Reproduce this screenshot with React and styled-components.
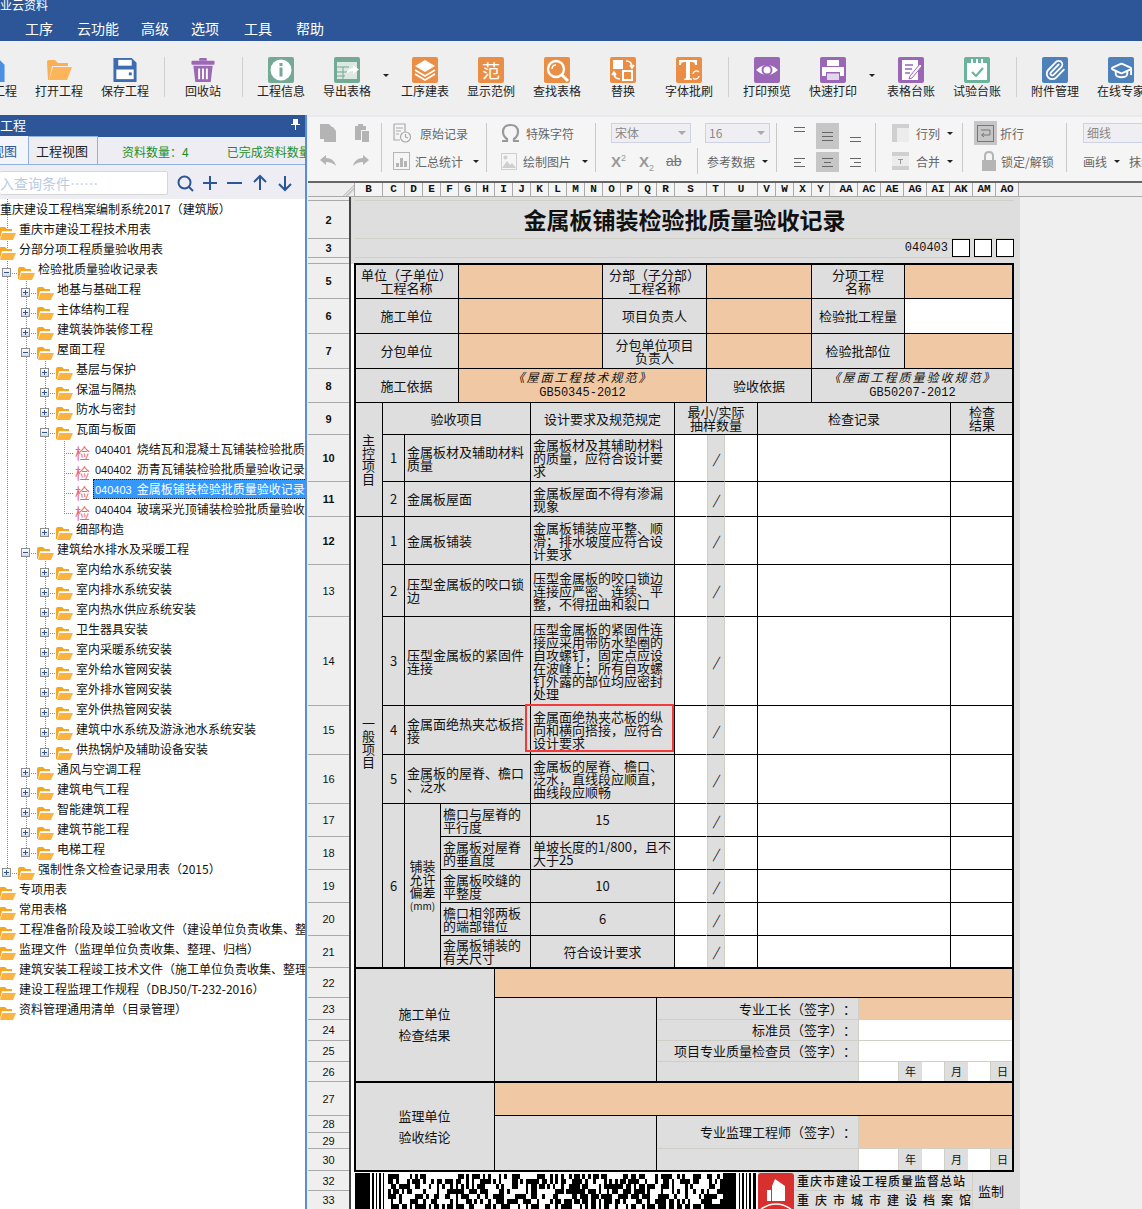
import React from "react";
import styled, { createGlobalStyle } from "styled-components";
import { Paperclip, GraduationCap } from "lucide-react";

const GlobalStyle = createGlobalStyle`
  html, body { margin: 0; padding: 0; background: #efefef; }
  body {
    font-family: "Noto Sans CJK SC", "Noto Sans", sans-serif;
    font-size: 13px;
    color: #111;
    text-spacing-trim: space-all;
  }
  * { box-sizing: border-box; }
`;

// ---------- layout shell ----------
const Page = styled.div`
  width: 1142px;
  height: 1209px;
  overflow: hidden;
  display: flex;
  flex-direction: column;
`;

const TitleBar = styled.div`
  height: 41px;
  flex: none;
  background: #2c5697;
  color: #fff;
  overflow: hidden;
`;

const Caption = styled.div`
  margin-top: -4px;
  height: 18px;
  line-height: 18px;
  font-size: 12px;
`;

const Menu = styled.div`
  display: flex;
  height: 27px;
  align-items: center;
  font-size: 14px;
`;

const MenuItem = styled.span`
  margin-left: ${(p) => p.$ml}px;
`;

const Toolbar = styled.div`
  height: 74px;
  flex: none;
  background: #efefef;
  overflow: hidden;
  display: flex;
  padding-top: 16px;
  margin-left: -40px;
  width: 1182px;
`;

const ToolItem = styled.div`
  width: 66px;
  flex: none;
  display: flex;
  flex-direction: column;
  align-items: center;
  font-size: 12px;
  color: #222;
  line-height: 16px;
  white-space: nowrap;
`;

const ToolIcon = styled.div`
  width: 26px;
  height: 26px;
  border-radius: 2px;
  background: ${(p) => p.$bg || "transparent"};
  color: #fff;
  display: flex;
  align-items: center;
  justify-content: center;
  font-size: 18px;
  line-height: 1;
`;

const ToolSep = styled.div`
  width: 12px;
  flex: none;
  display: flex;
  justify-content: center;
  height: 42px;
  &::after {
    content: "";
    width: 1px;
    height: 40px;
    background: #d0d0d0;
  }
`;

const ToolCaret = styled.div`
  width: 12px;
  flex: none;
  padding-top: 17px;
  display: flex;
  justify-content: center;
  &::after {
    content: "";
    width: 0;
    height: 0;
    border: 3px solid transparent;
    border-top: 3px solid #222;
  }
`;

const Workspace = styled.div`
  flex: 1;
  display: flex;
  min-height: 0;
`;

// ---------- left panel ----------
const LeftPanel = styled.div`
  width: 307px;
  flex: none;
  display: flex;
  flex-direction: column;
  background: #fff;
  border-right: 2px solid #5a8fd8;
  overflow: hidden;
`;

const PanelHead = styled.div`
  height: 22px;
  flex: none;
  background: #2c5697;
  color: #fff;
  display: flex;
  align-items: center;
  justify-content: space-between;
  padding: 0 5px 3px 0;
  font-size: 13px;
`;

const TabRow = styled.div`
  height: 28px;
  flex: none;
  background: #ededf3;
  display: flex;
  align-items: flex-end;
  border-bottom: 1px solid #8fb2e2;
  padding-top: 1px;
`;

const ViewTab = styled.div`
  height: 28px;
  width: ${(p) => p.$w}px;
  flex: none;
  display: flex;
  align-items: center;
  justify-content: flex-end;
  white-space: nowrap;
  padding-right: ${(p) => p.$pr}px;
  font-size: 13px;
  color: ${(p) => (p.$active ? "#2c5697" : "#222")};
  background: ${(p) => (p.$active ? "#f4f5fa" : "#eeeef2")};
  border-right: ${(p) => (p.$active ? "none" : "1px solid #8fb2e2")};
  border-left: ${(p) => (p.$active ? "none" : "1px solid #8fb2e2")};
  border-top: ${(p) => (p.$active ? "none" : "1px solid #8fb2e2")};
`;

const Count = styled.span`
  color: #1e8f1e;
  font-size: 12px;
  white-space: nowrap;
  align-self: center;
  margin-left: ${(p) => p.$ml}px;
`;

const SearchRow = styled.div`
  height: 34px;
  flex: none;
  background: #ededf3;
  display: flex;
  align-items: center;
  padding-top: 2px;
`;

const SearchInput = styled.div`
  width: 168px;
  height: 24px;
  background: #fff;
  border: 1px solid #d6d6d6;
  border-left: none;
  border-radius: 2px;
  color: #b8cce4;
  font-size: 14px;
  line-height: 22px;
  white-space: nowrap;
  overflow: hidden;
  flex: none;
`;

const SearchTools = styled.div`
  display: flex;
  gap: 7px;
  margin-left: 8px;
`;

const Tree = styled.div`
  position: relative;
  flex: 1;
  overflow: hidden;
`;

const TreeLines = styled.svg`
  position: absolute;
  left: 0;
  top: 0;
`;

const TreeRow = styled.div`
  position: relative;
  height: 20px;
  display: flex;
  align-items: center;
  white-space: nowrap;
  font-size: 12px;
  margin-left: ${(p) => p.$x}px;
`;

const Toggle = styled.span`
  position: absolute;
  left: -16px;
  top: 9px;
  width: 9px;
  height: 9px;
  background: linear-gradient(#fff, #d8d8e0);
  border: 1px solid #8c8c8c;
  &::before {
    content: "";
    position: absolute;
    left: 1px;
    right: 1px;
    top: 3px;
    height: 1px;
    background: #2c5697;
  }
  &::after {
    content: ${(p) => (p.$open ? "none" : '""')};
    position: absolute;
    top: 1px;
    bottom: 1px;
    left: 3px;
    width: 1px;
    background: #2c5697;
  }
`;

const FolderWrap = styled.span`
  width: 20px;
  flex: none;
  display: flex;
`;

const LeafMark = styled.span`
  width: 20px;
  flex: none;
  color: #e8686c;
  font-size: 15px;
  line-height: 20px;
  margin-top: 8px;
`;

const TreeLabel = styled.span`
  height: 20px;
  line-height: 19px;
  padding-right: 2px;
  ${(p) =>
    p.$selected &&
    `background: #3399ff; color: #fff; outline: 1px dotted #123; outline-offset: -1px; margin-left:-2px; padding-left:2px;`}
`;

const Code = styled.span`
  font-family: "Liberation Sans", sans-serif;
  font-size: 11px;
  margin-right: 5px;
`;

// ---------- right side ----------
const RightPanel = styled.div`
  flex: 1;
  min-width: 0;
  margin-left: 1px;
  display: flex;
  flex-direction: column;
  overflow: hidden;
  background: #efefef;
`;

const Ribbon = styled.div`
  height: 66px;
  flex: none;
  display: flex;
  background: #f5f5f5;
  border-top: 2px solid #e9e9ef;
  color: #666;
  font-size: 12px;
`;

const RibbonGroup = styled.div`
  width: ${(p) => p.$w}px;
  flex: none;
  height: 49px;
  margin-top: 6px;
  display: flex;
  flex-direction: column;
  gap: 8px;
  border-right: ${(p) => (p.$last ? "none" : "1px solid #c9c9c9")};
  padding-left: ${(p) => p.$pl || 0}px;
  white-space: nowrap;
`;

const RibbonRow = styled.div`
  height: 20px;
  display: flex;
  align-items: center;
  gap: ${(p) => p.$gap || 0}px;
`;

const DropCaret = styled.span`
  width: 0;
  height: 0;
  margin-left: ${(p) => p.$ml ?? 5}px;
  margin-top: 3px;
  border: 3px solid transparent;
  border-top: 3px solid #222;
`;

const FontSelect = styled.div`
  width: ${(p) => p.$w}px;
  height: 20px;
  margin-right: ${(p) => p.$mr || 0}px;
  border: 1px solid #cfd2e2;
  background: #efeff3;
  color: #888;
  padding-left: 3px;
  line-height: 18px;
  position: relative;
  flex: none;
  &::after {
    content: "";
    position: absolute;
    right: 4px;
    top: 7px;
    border: 4px solid transparent;
    border-top: 4px solid #aaa;
  }
`;

const Script = styled.span`
  font-family: "Liberation Sans", sans-serif;
  font-weight: 700;
  font-size: 15px;
  color: #999;
  width: ${(p) => p.$w}px;
  flex: none;
  sup, sub { font-size: 9px; font-weight: 400; line-height: 0; }
`;

const Strike = styled.span`
  font-family: "Liberation Sans", sans-serif;
  font-size: 14px;
  color: #777;
  text-decoration: line-through;
  width: 26px;
  flex: none;
`;

const InnerSep = styled.span`
  width: 1px;
  height: 26px;
  background: #c9c9c9;
  margin: 0 9px 0 5px;
`;

const AlignGrid = styled.div`
  display: grid;
  grid-template-columns: 28px 28px 28px;
  grid-template-rows: 26px 20px;
  row-gap: 3px;
`;

const AlignBtn = styled.div`
  display: flex;
  justify-content: center;
  align-items: ${(p) => p.$v || "center"};
  background: ${(p) => (p.$on ? "#c6c6c6" : "transparent")};
  width: 23px;
  padding: 2px 0;
`;

const ActiveBox = styled.span`
  width: 23px;
  height: 24px;
  display: flex;
  align-items: center;
  justify-content: center;
  background: #c6c6c6;
  flex: none;
`;

const ColHeader = styled.div`
  height: 16px;
  flex: none;
  display: flex;
  border-top: 2px solid #666;
  border-bottom: 1px solid #aaa;
`;

const Corner = styled.div`
  width: 47px;
  flex: none;
  background: linear-gradient(135deg, #eee 80%, #bbb 80%, #eee 86%, #bbb 86%, #eee 92%);
  border-right: 1px solid #aaa;
`;

const ColCell = styled.div`
  width: ${(p) => p.$w}px;
  flex: none;
  margin-right: ${(p) => p.$mr || 0}px;
  border-right: 1px solid #aaa;
  text-align: center;
  background: #f4f4f4;
  font: 700 11px/13px "Liberation Mono", monospace;
`;

const Sheet = styled.div`
  flex: 1;
  display: flex;
  min-height: 0;
`;

const RowHeads = styled.div`
  width: 41px;
  flex: none;
  display: flex;
  flex-direction: column;
  background: #efefef;
`;

const RowHead = styled.div`
  height: ${(p) => p.$h}px;
  flex: none;
  display: flex;
  align-items: center;
  justify-content: center;
  border-bottom: 1px solid #aaa;
  font: ${(p) => (p.$bold ? 700 : 400)} 11px "Liberation Sans", sans-serif;
  overflow: hidden;
`;

const Gutter = styled.div`
  width: 6px;
  flex: none;
  background: #fff;
  border-left: 2px solid #444;
  &::before {
    content: "";
    display: block;
    height: 67px;
    background: #dedede;
  }
`;

const SheetGrid = styled.div`
  position: relative;
  display: grid;
  width: 665px;
  flex: none;
  grid-template-columns: ${(p) => p.$cols};
  grid-template-rows: ${(p) => p.$rows};
  align-self: flex-start;
  font-size: 13px;
  line-height: 13px;
  color: #111;
`;

const BG = { gray: "#dedede", orange: "#f0c8a4", white: "#fff" };

const Cell = styled.div`
  grid-column: ${(p) => p.$col};
  grid-row: ${(p) => p.$row};
  display: flex;
  align-items: center;
  justify-content: ${(p) => (p.$left ? "flex-start" : p.$right ? "flex-end" : "center")};
  text-align: ${(p) => (p.$left ? "left" : p.$right ? "right" : "center")};
  white-space: pre-line;
  overflow: hidden;
  padding: 0 2px;
  padding-bottom: ${(p) => (p.$flat ? 0 : 1)}px;
  background: ${(p) => BG[p.$bg || "gray"]};
  border-right: 1px solid ${(p) => (p.$soft ? "#cfcfc8" : p.$none ? "transparent" : "#000")};
  border-bottom: 1px solid ${(p) => (p.$soft ? "#cfcfc8" : "#000")};
`;

const TallText = styled.div`
  line-height: 21px;
`;

const MmText = styled.span`
  font-size: 10px;
`;

const PlainCell = styled(Cell)`
  border: none;
  border-bottom: 1px solid #d0d0c8;
`;

const TitleCell = styled(PlainCell)`
  font-size: 23px;
  line-height: 26px;
  font-weight: 700;
`;

const SerialCell = styled(PlainCell)`
  justify-content: flex-end;
  gap: 4px;
  padding: 0;
  font: 12px "Liberation Mono", monospace;
`;

const SerialBox = styled.span`
  width: 18px;
  height: 18px;
  background: #fff;
  border: 1px solid #000;
  flex: none;
`;

const NormCell = styled(Cell)`
  font-size: 12px;
  line-height: 14px;
  font-style: italic;
  letter-spacing: 2px;
`;

const NormCode = styled.span`
  font: 12px/13px "Liberation Mono", monospace;
  letter-spacing: 0;
  font-style: normal;
`;

const Slash = styled(Cell)`
  font-style: italic;
  border-color: #000;
  border-right-color: #cfcfc8;
  box-shadow: inset 1px 0 #cfcfc8;
`;

const SmallCell = styled(Cell)`
  font-size: 11px;
  border-right: none;
`;

const Frame = styled.div`
  grid-column: ${(p) => p.$col};
  grid-row: ${(p) => p.$row};
  border: 2px solid #000;
  margin: -1px 0 -1px -1px;
  pointer-events: none;
  z-index: 2;
`;

const HeavyLine = styled.div`
  grid-column: ${(p) => p.$col};
  grid-row: ${(p) => p.$row};
  height: 2px;
  margin-top: -1px;
  background: #000;
  z-index: 2;
`;

const RedBox = styled.div`
  position: absolute;
  left: 170px;
  top: 507px;
  width: 149px;
  height: 48px;
  border: 2px solid #f23a3a;
  z-index: 3;
`;

const BarcodeCell = styled.div`
  grid-column: ${(p) => p.$col};
  grid-row: ${(p) => p.$row};
  background: #fff;
  overflow: hidden;
  padding-top: 2px;
`;

const LogoCell = styled.div`
  grid-column: ${(p) => p.$col};
  grid-row: ${(p) => p.$row};
  background: #dedede;
  padding-top: 2px;
`;

const StationCell = styled(Cell)`
  font-size: 12px;
  font-weight: 500;
  letter-spacing: ${(p) => p.$sp}px;
  border-right: none;
  border-bottom: 1px solid #cfcfc8;
  justify-content: flex-start;
  white-space: nowrap;
  padding-left: 2px;
`;

const StampCell = styled(Cell)`
  border: none;
  border-left: 1px solid #cfcfc8;
  justify-content: flex-start;
  padding-left: 5px;
`;

// ---------- drawings ----------
const Folder = ({ w = 26, h = 22 }) => (
  <svg width={w} height={h} viewBox="0 0 26 22">
    <path d="M2 21 L1 3 Q1 1 3 1 H9 L12 4 H22 V7 H6 L3 21 Z" fill="#f9af52" />
    <path d="M3 21 L7 8 H26 L21 21 Z" fill="#fdb55a" />
  </svg>
);

const TreeFolder = () => (
  <svg width="17" height="15" viewBox="0 0 17 15" style={{ marginTop: 6 }}>
    <path d="M0 4 Q0 2 2 2 H6 L8 4 H13 V6 H3 L1 14 H0 Z" fill="#f5a623" />
    <path d="M3 6 H13 V7 H4 Z" fill="#fff2d8" />
    <path d="M3.5 8 H17 L14 15 H1 Z" fill="#fdb33f" />
  </svg>
);

const Floppy = () => (
  <svg width="26" height="26" viewBox="0 0 26 27">
    <path d="M1 1 H20 L25 6 V26 H1 Z" fill="#3e6cb0" />
    <rect x="6" y="3" width="14" height="6" fill="#fff" />
    <rect x="4" y="13" width="18" height="10" fill="#fff" />
    <rect x="17" y="16" width="3" height="3" fill="#3e6cb0" />
  </svg>
);

const Trash = () => (
  <svg width="26" height="26" viewBox="0 0 26 27" fill="#9b69b4">
    <rect x="9" y="1" width="8" height="3" rx="1" />
    <rect x="1" y="4" width="24" height="4" rx="1" />
    <path d="M3 9 H23 L21 26 H5 Z" />
    <path d="M9 12 V23 M13 12 V23 M17 12 V23" stroke="#fff" strokeWidth="2" />
  </svg>
);

const Glyph = ({ children }) => (
  <svg width="26" height="26" viewBox="0 0 26 26" fill="none" stroke="#fff" strokeWidth="2">
    {children}
  </svg>
);

const InfoGlyph = () => (
  <Glyph>
    <circle cx="13" cy="13" r="10.5" fill="#fff" stroke="none" />
    <rect x="11.5" y="10.5" width="3" height="9" fill="#73a995" stroke="none" />
    <rect x="11.5" y="6" width="3" height="3" fill="#73a995" stroke="none" />
  </Glyph>
);

const ExportGlyph = () => (
  <Glyph>
    <rect x="3" y="5" width="20" height="17" fill="#dbe9e2" stroke="none" />
    <path d="M3 10 H15 M3 15 H13 M3 19 H11 M9 10 V22" stroke="#73a995" strokeWidth="1" />
    <path d="M12 17 Q14 11 19 11 V8 L25 12.5 L19 17 V14 Q15 14 12 17 Z" fill="#fff" stroke="none" />
  </Glyph>
);

const LayersGlyph = () => (
  <Glyph>
    <path d="M13 3 L23 9 L13 15 L3 9 Z" fill="#fff" stroke="none" />
    <path d="M3 13 L13 19 L23 13 M3 17 L13 23 L23 17" strokeWidth="1.6" />
  </Glyph>
);

const SearchGlyph = () => (
  <Glyph>
    <circle cx="12" cy="12" r="8" strokeWidth="2.4" />
    <path d="M18 18 L24 24" strokeWidth="3" />
    <path d="M8 12 Q8 8 12 8" strokeWidth="1.4" />
  </Glyph>
);

const ReplaceGlyph = () => (
  <Glyph>
    <rect x="3" y="3" width="10" height="9" fill="#fff" stroke="none" />
    <rect x="13" y="14" width="9" height="9" />
    <path d="M16 4 Q22 4 22 10 M20 8 L22 11 L24 8 M10 22 Q4 22 4 16 M2 18 L4 15 L6 18" strokeWidth="1.6" />
  </Glyph>
);

const TypeGlyph = () => (
  <svg width="26" height="26" viewBox="0 0 26 26" fill="#fff">
    <path d="M3 3 H21 V8 H19 Q19 5 16 5 H14 V21 L16 22 V23 H8 V22 L10 21 V5 H8 Q5 5 5 8 H3 Z" />
    <path d="M17 17 A3.5 3.5 0 0 1 23 15 M23 19 A3.5 3.5 0 0 1 17 21" fill="none" stroke="#fff" strokeWidth="1.4" />
  </svg>
);

const EyeGlyph = () => (
  <Glyph>
    <path d="M2 13 Q13 3 24 13 Q13 23 2 13 Z" fill="#fff" stroke="none" />
    <circle cx="13" cy="13" r="4.5" fill="none" stroke="#9a66b6" strokeWidth="2" />
  </Glyph>
);

const PrinterGlyph = () => (
  <Glyph>
    <rect x="7" y="3" width="12" height="6" fill="#fff" stroke="none" />
    <path d="M2 10 H24 V19 H20 V15 H6 V19 H2 Z" fill="#fff" stroke="none" />
    <rect x="7" y="16.5" width="12" height="6.5" fill="#e3d5ec" stroke="none" />
  </Glyph>
);

const NoteGlyph = () => (
  <Glyph>
    <path d="M4 3 H20 V23 H4 Z" fill="#fff" stroke="none" />
    <path d="M7 8 H15 M7 12 H14 M7 16 H12" stroke="#9a66b6" strokeWidth="1.5" />
    <path d="M12 19 L22 7 L24 9 L14 21 L11 22 Z" fill="#fff" stroke="#9a66b6" strokeWidth="1" />
  </Glyph>
);

const PlanGlyph = () => (
  <Glyph>
    <path d="M3 6 H23 V23 H3 Z" fill="#fff" stroke="none" />
    <path d="M8 2 V9 M13 2 V9 M18 2 V9" strokeWidth="2" />
    <path d="M8 15 L12 19 L19 11" stroke="#6bb39a" strokeWidth="2.2" />
  </Glyph>
);

const Gray = ({ w = 20, h = 20, children, vb }) => (
  <svg width={w} height={h} viewBox={vb || `0 0 ${w} ${h}`} fill="#b4b4b4" stroke="none" style={{ flex: "none" }}>
    {children}
  </svg>
);

const Lines = ({ rows }) => (
  <svg width="17" height="12" viewBox="0 0 17 12" stroke="#666" strokeWidth="1">
    {rows.map(([a, b], i) => (
      <path key={i} d={`M${a} ${i * 4 + 2.5} H${b}`} />
    ))}
  </svg>
);

const SearchIcons = () => (
  <>
    <svg width="18" height="18" viewBox="0 0 18 18" fill="none" stroke="#2c5697" strokeWidth="2">
      <circle cx="8.5" cy="8.5" r="6" />
      <path d="M13 13 L17 17" />
    </svg>
    <svg width="18" height="18" viewBox="0 0 18 18" fill="none" stroke="#2c5697" strokeWidth="2">
      <path d="M2 9 H16 M9 2 V16" />
    </svg>
    <svg width="18" height="18" viewBox="0 0 18 18" fill="none" stroke="#2c5697" strokeWidth="2">
      <path d="M1 9 H16" />
    </svg>
    <svg width="18" height="18" viewBox="0 0 18 18" fill="none" stroke="#2c5697" strokeWidth="2">
      <path d="M9 16 V2 M3 8 L9 2 L15 8" />
    </svg>
    <svg width="18" height="18" viewBox="0 0 18 18" fill="none" stroke="#2c5697" strokeWidth="2">
      <path d="M9 2 V16 M3 10 L9 16 L15 10" />
    </svg>
  </>
);

// pseudo random modules for the PDF417 style strip
const barcodeRects = (() => {
  const out = [];
  let seed = 4177;
  const next = () => {
    seed = (seed * 1103 + 12345) % 65536;
    return seed / 65536;
  };
  for (let y = 0; y < 8; y++) {
    for (let x = 33; x < 366; x += 2.7) {
      if (next() > 0.48) out.push([x, y * 5 + 1, 2.7, 5]);
    }
  }
  return out;
})();

const Barcode = () => (
  <svg width="403" height="38" viewBox="0 0 403 38" shapeRendering="crispEdges" style={{ display: "block" }}>
    <rect x="0" y="0" width="15" height="38" />
    <path d="M17 0 h2 v38 h-2z M21 0 h1 v38 h-1z M24 0 h2 v38 h-2z M28 0 h1 v38 h-1z" />
    {barcodeRects.map(([x, y, w, h], i) => (
      <rect key={i} x={x} y={y} width={w} height={h} />
    ))}
    <rect x="368" y="0" width="13" height="38" />
    <path d="M384 0 h1 v38 h-1z M387 0 h2 v38 h-2z M391 0 h1 v38 h-1z M394 0 h2 v38 h-2z M398 0 h3 v38 h-3z" />
  </svg>
);

const Logo = () => (
  <svg width="36" height="38" viewBox="0 0 36 38" style={{ display: "block" }}>
    <path d="M3 0 H33 Q36 0 36 3 V38 H0 V3 Q0 0 3 0 Z" fill="#d8302e" />
    <path d="M14 28 V13 L17 6 L27 13 V28 Z M9 28 V17 H13 V28 Z" fill="#fff" />
    <path d="M3 36 Q18 26 33 36" fill="none" stroke="#fff" strokeWidth="1.5" />
  </svg>
);

// ---------- data ----------
const MENU = [["工序", 25], ["云功能", 24], ["高级", 22], ["选项", 22], ["工具", 25], ["帮助", 24]];

const TOOLS = [
  { label: "新建工程", icon: (
    <svg width="26" height="26" viewBox="0 0 26 27"><path d="M1 1 H18 L25 8 V26 H1 Z" fill="#4a90e2" /></svg>
  ) },
  { label: "打开工程", icon: <Folder w={26} h={24} /> },
  { label: "保存工程", icon: <Floppy /> },
  { sep: true },
  { label: "回收站", icon: <Trash /> },
  { sep: true },
  { label: "工程信息", bg: "#73a995", icon: <InfoGlyph /> },
  { label: "导出表格", bg: "#73a995", icon: <ExportGlyph />, caret: true },
  { label: "工序建表", bg: "#eb8e45", icon: <LayersGlyph /> },
  { label: "显示范例", bg: "#eb8e45", icon: "范" },
  { label: "查找表格", bg: "#eb8e45", icon: <SearchGlyph /> },
  { label: "替换", bg: "#eb8e45", icon: <ReplaceGlyph /> },
  { label: "字体批刷", bg: "#eb8e45", icon: <TypeGlyph /> },
  { sep: true },
  { label: "打印预览", bg: "#9a66b6", icon: <EyeGlyph /> },
  { label: "快速打印", bg: "#9a66b6", icon: <PrinterGlyph />, caret: true },
  { label: "表格台账", bg: "#9a66b6", icon: <NoteGlyph /> },
  { label: "试验台账", bg: "#6bb39a", icon: <PlanGlyph /> },
  { sep: true },
  { label: "附件管理", bg: "#4e80b9", icon: <Paperclip size={22} strokeWidth={2} /> },
  { label: "在线专家", bg: "#4e80b9", icon: <GraduationCap size={23} strokeWidth={2} /> },
];

const TREE = [
  [0, "重庆建设工程档案编制系统2017（建筑版）"],
  [1, "重庆市建设工程技术用表"],
  [1, "分部分项工程质量验收用表"],
  [2, "检验批质量验收记录表", "open"],
  [3, "地基与基础工程", "closed"],
  [3, "主体结构工程", "closed"],
  [3, "建筑装饰装修工程", "closed"],
  [3, "屋面工程", "open"],
  [4, "基层与保护", "closed"],
  [4, "保温与隔热", "closed"],
  [4, "防水与密封", "closed"],
  [4, "瓦面与板面", "open"],
  [5, "烧结瓦和混凝土瓦铺装检验批质量验收记录", "leaf", "040401"],
  [5, "沥青瓦铺装检验批质量验收记录", "leaf", "040402"],
  [5, "金属板铺装检验批质量验收记录", "leaf", "040403"],
  [5, "玻璃采光顶铺装检验批质量验收记录", "leaf", "040404"],
  [4, "细部构造", "closed"],
  [3, "建筑给水排水及采暖工程", "open"],
  [4, "室内给水系统安装", "closed"],
  [4, "室内排水系统安装", "closed"],
  [4, "室内热水供应系统安装", "closed"],
  [4, "卫生器具安装", "closed"],
  [4, "室内采暖系统安装", "closed"],
  [4, "室外给水管网安装", "closed"],
  [4, "室外排水管网安装", "closed"],
  [4, "室外供热管网安装", "closed"],
  [4, "建筑中水系统及游泳池水系统安装", "closed"],
  [4, "供热锅炉及辅助设备安装", "closed"],
  [3, "通风与空调工程", "closed"],
  [3, "建筑电气工程", "closed"],
  [3, "智能建筑工程", "closed"],
  [3, "建筑节能工程", "closed"],
  [3, "电梯工程", "closed"],
  [2, "强制性条文检查记录用表（2015）", "closed"],
  [1, "专项用表"],
  [1, "常用表格"],
  [1, "工程准备阶段及竣工验收文件（建设单位负责收集、整理、归档）"],
  [1, "监理文件（监理单位负责收集、整理、归档）"],
  [1, "建筑安装工程竣工技术文件（施工单位负责收集、整理、归档）"],
  [1, "建设工程监理工作规程（DBJ50/T-232-2016）"],
  [1, "资料管理通用清单（目录管理）"],
];

// guide lines of the tree: [x, first row, last row]
const GUIDES = [[7, 0, 33], [26, 3, 32], [45, 7, 16], [45, 17, 27], [64, 11, 15]];

const COLS = [
  ["B", 28], ["C", 22], ["D", 18], ["E", 18], ["F", 18], ["G", 18], ["H", 18], ["I", 18], ["J", 18],
  ["K", 18], ["L", 18], ["M", 18], ["N", 18], ["O", 18], ["P", 18], ["Q", 18], ["R", 18], ["S", 32],
  ["T", 18], ["U", 33], ["V", 18], ["W", 18], ["X", 18], ["Y", 18, 5], ["AA", 23], ["AC", 23],
  ["AE", 23], ["AG", 23], ["AI", 23], ["AK", 23], ["AM", 23], ["AO", 23],
];

const ROWS = [
  [1, 4], [2, 38], [3, 19], [4, 6], [5, 35], [6, 35], [7, 35], [8, 34], [9, 32], [10, 47], [11, 35],
  [12, 48], [13, 52], [14, 89], [15, 49], [16, 49], [17, 33], [18, 33], [19, 33], [20, 33], [21, 32],
  [22, 30], [23, 22], [24, 21], [25, 21], [26, 20], [27, 34], [28, 17], [29, 16], [30, 22], [32, 20], [33, 19],
];

const XS = [355, 383, 405, 441, 459, 495, 531, 603, 657, 675, 707, 725, 758, 795, 812, 859, 899, 905, 922, 945, 951, 968, 972, 991, 1014, 1020];
const gridCols = XS.slice(1).map((x, i) => `${x - XS[i]}px`).join(" ");
const gridRows = ROWS.map((r) => `${r[1]}px`).join(" ");

const col = (a, b) => `${XS.indexOf(a) + 1} / ${XS.indexOf(b) + 1}`;
const rowIdx = (n) => ROWS.findIndex((r) => r[0] === n) + 1;
const row = (a, b = a) => `${rowIdx(a)} / ${rowIdx(b) + 1}`;

const at = (x1, x2, r1, r2 = r1) => ({ $col: col(x1, x2), $row: row(r1, r2) });

// checklist rows: row, no, name, requirement
const CHECKS = [
  [10, "1", "金属板材及辅助材料\n质量", "金属板材及其辅助材料\n的质量，应符合设计要\n求"],
  [11, "2", "金属板屋面", "金属板屋面不得有渗漏\n现象"],
  [12, "1", "金属板铺装", "金属板铺装应平整、顺\n滑；排水坡度应符合设\n计要求"],
  [13, "2", "压型金属板的咬口锁\n边", "压型金属板的咬口锁边\n连接应严密、连续、平\n整，不得扭曲和裂口"],
  [14, "3", "压型金属板的紧固件\n连接", "压型金属板的紧固件连\n接应采用带防水垫圈的\n自攻螺钉，固定点应设\n在波峰上；所有自攻螺\n钉外露的部位均应密封\n处理"],
  [15, "4", "金属面绝热夹芯板搭\n接", "金属面绝热夹芯板的纵\n向和横向搭接，应符合\n设计要求"],
  [16, "5", "金属板的屋脊、檐口\n、泛水", "金属板的屋脊、檐口、\n泛水，直线段应顺直，\n曲线段应顺畅"],
];

const TOLERANCES = [
  [17, "檐口与屋脊的\n平行度", "15"],
  [18, "金属板对屋脊\n的垂直度", "单坡长度的1/800，且不\n大于25", true],
  [19, "金属板咬缝的\n平整度", "10"],
  [20, "檐口相邻两板\n的端部错位", "6"],
  [21, "金属板铺装的\n有关尺寸", "符合设计要求"],
];

const RecordCells = ({ r }) => (
  <>
    <Cell {...at(675, 707, r)} $bg="white" $none />
    <Slash {...at(707, 725, r)} $flat>/</Slash>
    <Cell {...at(725, 758, r)} $bg="white" />
    <Cell {...at(758, 951, r)} $bg="white" />
    <Cell {...at(951, 1014, r)} $bg="white" />
  </>
);

const DateCells = ({ r }) => (
  <>
    <Cell {...at(657, 859, r)} $soft />
    <Cell {...at(859, 899, r)} $bg="white" $soft />
    <SmallCell {...at(899, 922, r)} $soft>年</SmallCell>
    <Cell {...at(922, 945, r)} $bg="white" $soft />
    <SmallCell {...at(945, 968, r)} $soft>月</SmallCell>
    <Cell {...at(968, 991, r)} $bg="white" $soft />
    <SmallCell {...at(991, 1014, r)} $soft>日</SmallCell>
  </>
);

const App = () => (
  <Page>
    <GlobalStyle />
    <TitleBar>
      <Caption>业云资料</Caption>
      <Menu>
        {MENU.map(([t, ml]) => (
          <MenuItem key={t} $ml={ml}>{t}</MenuItem>
        ))}
      </Menu>
    </TitleBar>

    <Toolbar>
      {TOOLS.map((t, i) =>
        t.sep ? (
          <ToolSep key={i} />
        ) : (
          <React.Fragment key={i}>
            <ToolItem>
              <ToolIcon $bg={t.bg}>{t.icon}</ToolIcon>
              {t.label}
            </ToolItem>
            {t.caret && <ToolCaret />}
          </React.Fragment>
        )
      )}
    </Toolbar>

    <Workspace>
      <LeftPanel>
        <PanelHead>
          工程
          <svg width="9" height="11" viewBox="0 0 9 11" fill="#fff">
            <path d="M2 0 H7 V5 H9 V6 H5 V11 H4 V6 H0 V5 H2 Z" />
          </svg>
        </PanelHead>
        <TabRow>
          <ViewTab $active $w={28} $pr={11}>视图</ViewTab>
          <ViewTab $w={70} $pr={9}>工程视图</ViewTab>
          <Count $ml={24}>资料数量：4</Count>
          <Count $ml={38}>已完成资料数量：0</Count>
        </TabRow>
        <SearchRow>
          <SearchInput>入查询条件⋯⋯</SearchInput>
          <SearchTools>
            <SearchIcons />
          </SearchTools>
        </SearchRow>
        <Tree>
          <TreeLines width="305" height="900" fill="none" stroke="#888" strokeDasharray="1 1">
            {GUIDES.map(([x, a, b], i) => (
              <path key={i} d={`M${x + 0.5} ${a === 0 ? 0 : a * 20 + 14} V${b * 20 + 14}`} />
            ))}
            {TREE.map(([d, , kind], i) =>
              kind ? (
                <path
                  key={i}
                  d={`M${(d - 2) * 19 + (kind === "leaf" ? 7 : 12)} ${i * 20 + 14.5} h${kind === "leaf" ? 10 : 6}`}
                />
              ) : null
            )}
          </TreeLines>
          {TREE.map(([d, text, kind, code], i) => (
            <TreeRow key={i} $x={d === 0 ? 0 : (d - 2) * 19 + 18}>
              {(kind === "open" || kind === "closed") && <Toggle $open={kind === "open"} />}
              {d > 0 && kind !== "leaf" && (
                <FolderWrap>
                  <TreeFolder />
                </FolderWrap>
              )}
              {kind === "leaf" && <LeafMark>检</LeafMark>}
              <TreeLabel $selected={code === "040403"}>
                {code && <Code>{code}</Code>}
                {text}
              </TreeLabel>
            </TreeRow>
          ))}
        </Tree>
      </LeftPanel>

      <RightPanel>
        <Ribbon>
          <RibbonGroup $w={74} $pl={11}>
            <RibbonRow $gap={15}>
              <Gray w={18} h={20}>
                <path d="M1 1 H10 L13 4 V16 H1 Z M5 4 H14 L17 8 V19 H5 Z" />
              </Gray>
              <Gray w={18} h={20}>
                <path d="M3 3 H6 V1 H11 V3 H14 V7 H9 V17 H3 Z M10 8 H17 V19 H10 Z" />
              </Gray>
            </RibbonRow>
            <RibbonRow $gap={15}>
              <Gray w={18} h={14}>
                <path d="M1 6 L7 1 V4 Q15 4 17 12 Q13 8 7 8 V11 Z" />
              </Gray>
              <Gray w={18} h={14}>
                <path d="M17 6 L11 1 V4 Q3 4 1 12 Q5 8 11 8 V11 Z" />
              </Gray>
            </RibbonRow>
          </RibbonGroup>

          <RibbonGroup $w={105} $pl={11}>
            <RibbonRow $gap={9}>
              <svg width="18" height="20" viewBox="0 0 18 20" fill="none" stroke="#aaa" strokeWidth="1.2">
                <path d="M1 1 H12 V9 M1 1 V17 H7 M3 5 H10 M3 8 H8 M3 11 H6" />
                <circle cx="12.5" cy="14" r="5" />
                <path d="M12.5 11 V14 L15 15" />
              </svg>
              原始记录
            </RibbonRow>
            <RibbonRow $gap={5}>
              <svg width="17" height="18" viewBox="0 0 17 18" fill="#b5b5b5" stroke="none">
                <path d="M0 0 H17 V18 H0 Z M1 1 V17 H16 V1 Z" />
                <path d="M3 11 H6 V15 H3 Z M7 6 H10 V15 H7 Z M11 9 H14 V15 H11 Z" />
              </svg>
              汇总统计
              <DropCaret />
            </RibbonRow>
          </RibbonGroup>

          <RibbonGroup $w={109} $pl={14}>
            <RibbonRow $gap={6}>
              <svg width="19" height="20" viewBox="0 0 19 20" fill="none" stroke="#999" strokeWidth="2.2">
                <path d="M1 18 H6 V16 Q2 13 2 9 Q2 2 9.5 2 Q17 2 17 9 Q17 13 13 16 V18 H18" />
              </svg>
              特殊字符
            </RibbonRow>
            <RibbonRow $gap={6}>
              <svg width="16" height="17" viewBox="0 0 16 17" fill="#cfcfcf">
                <path d="M0 0 H16 V17 H0 Z M1 1 V16 H15 V1 Z" />
                <path d="M1 15 L6 8 L9 12 L11 10 L15 15 Z" />
                <circle cx="4.5" cy="4.5" r="2" />
              </svg>
              绘制图片
              <DropCaret />
            </RibbonRow>
          </RibbonGroup>

          <RibbonGroup $w={181} $pl={15}>
            <RibbonRow>
              <FontSelect $w={80} $mr={14}>宋体</FontSelect>
              <FontSelect $w={65}>16</FontSelect>
            </RibbonRow>
            <RibbonRow>
              <Script $w={28}>X<sup>2</sup></Script>
              <Script $w={27}>X<sub>2</sub></Script>
              <Strike>ab</Strike>
              <InnerSep />
              参考数据
              <DropCaret $ml={7} />
            </RibbonRow>
          </RibbonGroup>

          <RibbonGroup $w={99} $pl={11}>
            <AlignGrid>
              <AlignBtn $v="flex-start"><Lines rows={[[3, 14], [3, 14]]} /></AlignBtn>
              <AlignBtn $on><Lines rows={[[3, 14], [3, 14], [3, 14]]} /></AlignBtn>
              <AlignBtn $v="flex-end"><Lines rows={[[3, 14], [3, 14]]} /></AlignBtn>
              <AlignBtn><Lines rows={[[3, 14], [3, 10], [3, 14]]} /></AlignBtn>
              <AlignBtn $on><Lines rows={[[3, 14], [5, 12], [3, 14]]} /></AlignBtn>
              <AlignBtn><Lines rows={[[3, 14], [7, 14], [3, 14]]} /></AlignBtn>
            </AlignGrid>
          </RibbonGroup>

          <RibbonGroup $w={87} $pl={16}>
            <RibbonRow $gap={7}>
              <svg width="17" height="18" viewBox="0 0 17 18" fill="#cfcfcf">
                <path d="M0 0 H17 V4 H5 V18 H0 Z" />
                <path d="M5 4 H17 V18 H5 Z" fill="#ececec" />
              </svg>
              行列
              <DropCaret $ml={0} />
            </RibbonRow>
            <RibbonRow $gap={7}>
              <svg width="17" height="18" viewBox="0 0 17 18" fill="#cfcfcf">
                <path d="M0 0 H17 V4 H0 Z M0 14 H17 V18 H0 Z" />
                <path d="M0 4 H17 V14 H0 Z" fill="#ececec" />
                <path d="M6 7 H11 V8 H9 V12 H8 V8 H6 Z" fill="#999" />
              </svg>
              合并
              <DropCaret $ml={0} />
            </RibbonRow>
          </RibbonGroup>

          <RibbonGroup $w={104} $pl={11}>
            <RibbonRow $gap={3}>
              <ActiveBox>
                <svg width="17" height="17" viewBox="0 0 17 17" fill="none" stroke="#777">
                  <rect x="0.5" y="0.5" width="16" height="16" />
                  <path d="M4 5 H13 V10 H5 M7 8 L4.5 10 L7 12" />
                </svg>
              </ActiveBox>
              折行
            </RibbonRow>
            <RibbonRow $gap={2}>
              <svg width="20" height="20" viewBox="0 0 20 20" fill="#b5b5b5" style={{ marginLeft: 5 }}>
                <path d="M3 9 H17 V20 H3 Z" />
                <path d="M6 9 V5 Q6 1 10 1 Q14 1 14 5 V9" fill="none" stroke="#b5b5b5" strokeWidth="2" />
              </svg>
              锁定/解锁
            </RibbonRow>
          </RibbonGroup>

          <RibbonGroup $w={75} $pl={16} $last>
            <RibbonRow>
              <FontSelect $w={80}>细线</FontSelect>
            </RibbonRow>
            <RibbonRow>
              画线
              <DropCaret $ml={7} />
              <span style={{ marginLeft: 9 }}>抹线</span>
            </RibbonRow>
          </RibbonGroup>
        </Ribbon>

        <ColHeader>
          <Corner />
          {COLS.map(([n, w, mr]) => (
            <ColCell key={n} $w={w} $mr={mr}>{n}</ColCell>
          ))}
        </ColHeader>

        <Sheet>
          <RowHeads>
            {ROWS.map(([n, h]) => (
              <RowHead key={n} $h={h} $bold={n <= 12}>{h > 10 ? n : ""}</RowHead>
            ))}
          </RowHeads>
          <Gutter />
          <SheetGrid $cols={gridCols} $rows={gridRows}>
            <PlainCell {...at(355, 1014, 1)} />
            <TitleCell {...at(355, 1014, 2)}>金属板铺装检验批质量验收记录</TitleCell>
            <SerialCell {...at(355, 1014, 3)}>
              040403 <SerialBox /> <SerialBox /> <SerialBox />
            </SerialCell>
            <PlainCell {...at(355, 1014, 4)} />
            <PlainCell {...at(1014, 1020, 1, 33)} />

            <Cell {...at(355, 459, 5)}>{"单位（子单位）\n工程名称"}</Cell>
            <Cell {...at(459, 603, 5)} $bg="orange" />
            <Cell {...at(603, 707, 5)}>{"分部（子分部）\n工程名称"}</Cell>
            <Cell {...at(707, 812, 5)} $bg="orange" />
            <Cell {...at(812, 905, 5)}>{"分项工程\n名称"}</Cell>
            <Cell {...at(905, 1014, 5)} $bg="orange" />

            <Cell {...at(355, 459, 6)}>施工单位</Cell>
            <Cell {...at(459, 603, 6)} $bg="orange" />
            <Cell {...at(603, 707, 6)}>项目负责人</Cell>
            <Cell {...at(707, 812, 6)} $bg="orange" />
            <Cell {...at(812, 905, 6)}>检验批工程量</Cell>
            <Cell {...at(905, 1014, 6)} $bg="white" />

            <Cell {...at(355, 459, 7)}>分包单位</Cell>
            <Cell {...at(459, 603, 7)} $bg="orange" />
            <Cell {...at(603, 707, 7)}>{"分包单位项目\n负责人"}</Cell>
            <Cell {...at(707, 812, 7)} $bg="orange" />
            <Cell {...at(812, 905, 7)}>检验批部位</Cell>
            <Cell {...at(905, 1014, 7)} $bg="orange" />

            <Cell {...at(355, 459, 8)}>施工依据</Cell>
            <NormCell {...at(459, 707, 8)} $bg="orange">
              <div>
                《屋面工程技术规范》
                <br />
                <NormCode>GB50345-2012</NormCode>
              </div>
            </NormCell>
            <Cell {...at(707, 812, 8)}>验收依据</Cell>
            <NormCell {...at(812, 1014, 8)}>
              <div>
                《屋面工程质量验收规范》
                <br />
                <NormCode>GB50207-2012</NormCode>
              </div>
            </NormCell>

            <Cell {...at(355, 383, 9, 11)}>{"主\n控\n项\n目"}</Cell>
            <Cell {...at(383, 531, 9)}>验收项目</Cell>
            <Cell {...at(531, 675, 9)}>设计要求及规范规定</Cell>
            <Cell {...at(675, 758, 9)}>{"最小/实际\n抽样数量"}</Cell>
            <Cell {...at(758, 951, 9)}>检查记录</Cell>
            <Cell {...at(951, 1014, 9)}>{"检查\n结果"}</Cell>

            <Cell {...at(355, 383, 12, 21)}>{"一\n般\n项\n目"}</Cell>

            {CHECKS.map(([r, no, name, req]) => (
              <React.Fragment key={r}>
                <Cell {...at(383, 405, r)}>{no}</Cell>
                <Cell {...at(405, 531, r)} $left>{name}</Cell>
                <Cell {...at(531, 675, r)} $left>{req}</Cell>
                <RecordCells r={r} />
              </React.Fragment>
            ))}

            <Cell {...at(383, 405, 17, 21)}>6</Cell>
            <Cell {...at(405, 441, 17, 21)}>
              <div>
                {"铺装\n允许\n偏差\n"}
                <MmText>(mm)</MmText>
              </div>
            </Cell>
            {TOLERANCES.map(([r, name, req, left]) => (
              <React.Fragment key={r}>
                <Cell {...at(441, 531, r)} $left>{name}</Cell>
                <Cell {...at(531, 675, r)} $left={left}>{req}</Cell>
                <RecordCells r={r} />
              </React.Fragment>
            ))}

            <Cell {...at(355, 495, 22, 26)}>
              <TallText>{"施工单位\n检查结果"}</TallText>
            </Cell>
            <Cell {...at(495, 1014, 22)} $bg="orange" />
            <Cell {...at(495, 657, 23, 26)} />
            <Cell {...at(657, 859, 23)} $right $soft>专业工长（签字）：</Cell>
            <Cell {...at(859, 1014, 23)} $bg="orange" $soft />
            <Cell {...at(657, 859, 24)} $right $soft>标准员（签字）：</Cell>
            <Cell {...at(859, 1014, 24)} $bg="white" $soft />
            <Cell {...at(657, 859, 25)} $right $soft>项目专业质量检查员（签字）：</Cell>
            <Cell {...at(859, 1014, 25)} $bg="white" $soft />
            <DateCells r={26} />

            <Cell {...at(355, 495, 27, 30)}>
              <TallText>{"监理单位\n验收结论"}</TallText>
            </Cell>
            <Cell {...at(495, 1014, 27)} $bg="orange" />
            <Cell {...at(495, 657, 28, 30)} />
            <Cell {...at(657, 859, 28, 29)} $right $soft>专业监理工程师（签字）：</Cell>
            <Cell {...at(859, 1014, 28, 29)} $bg="orange" $soft />
            <DateCells r={30} />

            <BarcodeCell {...at(355, 758, 32, 33)}>
              <Barcode />
            </BarcodeCell>
            <LogoCell {...at(758, 795, 32, 33)}>
              <Logo />
            </LogoCell>
            <StationCell {...at(795, 972, 32)} $sp={1}>重庆市建设工程质量监督总站</StationCell>
            <StationCell {...at(795, 972, 33)} $sp={6}>重庆市城市建设档案馆</StationCell>
            <StampCell {...at(972, 1014, 32, 33)}>监制</StampCell>

            <HeavyLine {...at(355, 1014, 22)} />
            <HeavyLine {...at(355, 1014, 27)} />
            <Frame {...at(355, 1014, 5, 30)} />
            <RedBox />
          </SheetGrid>
        </Sheet>
      </RightPanel>
    </Workspace>
  </Page>
);

export default App;
